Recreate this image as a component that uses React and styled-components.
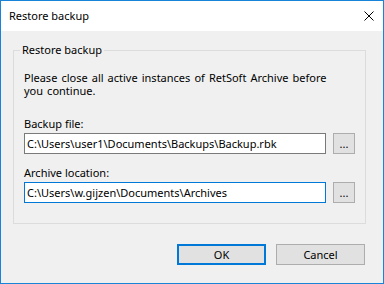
import React from 'react';
import styled, { createGlobalStyle } from 'styled-components';

const GlobalStyle = createGlobalStyle`
  html, body {
    margin: 0;
    padding: 0;
    background: #ffffff;
  }

  body {
    font-family: "Noto Sans", "Liberation Sans", sans-serif;
    font-size: 11px;
    color: #000000;
  }

  * {
    box-sizing: border-box;
  }
`;

const CloseIcon = () => (
  <svg width="10" height="10" viewBox="0 0 10 10" aria-hidden="true">
    <path d="M0.5 0.5 L9.5 9.5 M9.5 0.5 L0.5 9.5" stroke="#000" strokeWidth="1" fill="none" />
  </svg>
);

const PathField = ({ label, value, focused }) => (
  <FieldRow>
    <Label>{label}</Label>
    <InputLine>
      <TextBox focused={focused}>{value}</TextBox>
      <BrowseButton>...</BrowseButton>
    </InputLine>
  </FieldRow>
);

const App = () => (
  <>
    <GlobalStyle />
    <Window>
      <TitleBar>
        <Title>Restore backup</Title>
        <CloseButton>
          <CloseIcon />
        </CloseButton>
      </TitleBar>

      <Body>
        <GroupBox>
          <Legend>Restore backup</Legend>
          <Message>
            Please close all active instances of RetSoft Archive before
            <br />
            you continue.
          </Message>

          <PathField
            label="Backup file:"
            value="C:\Users\user1\Documents\Backups\Backup.rbk"
          />
          <PathField
            label="Archive location:"
            value="C:\Users\w.gijzen\Documents\Archives"
            focused
          />
        </GroupBox>

        <ButtonBar>
          <DialogButton primary>OK</DialogButton>
          <DialogButton>Cancel</DialogButton>
        </ButtonBar>
      </Body>
    </Window>
  </>
);

export default App;

const Window = styled.div`
  display: flex;
  flex-direction: column;
  width: 384px;
  height: 284px;
  border: 1px solid #1883d7;
  background: #f0f0f0;
`;

const TitleBar = styled.div`
  display: flex;
  align-items: center;
  justify-content: space-between;
  height: 30px;
  padding: 0 9px 0 8px;
  background: #ffffff;
`;

const Title = styled.span`
  line-height: 16px;
`;

const CloseButton = styled.span`
  display: flex;
  align-items: center;
  height: 10px;
`;

const Body = styled.div`
  display: flex;
  flex: 1;
  flex-direction: column;
  padding: 12px 17px 0 12px;
`;

const GroupBox = styled.fieldset`
  margin: 0;
  padding: 14px 10px 20px 10px;
  border: 1px solid #dcdcdc;
  min-width: 0;
`;

const Legend = styled.legend`
  margin-left: -4px;
  padding: 0 2px;
  line-height: 14px;
`;

const Message = styled.p`
  margin: 0 0 20px;
  line-height: 13px;
  word-spacing: 1.2px;
  white-space: nowrap;
`;

const FieldRow = styled.div`
  display: flex;
  flex-direction: column;

  & + & {
    margin-top: 12px;
  }
`;

const Label = styled.div`
  line-height: 13px;
  margin-bottom: 3px;
`;

const InputLine = styled.div`
  display: flex;
  gap: 7px;
`;

const TextBox = styled.div`
  width: 302px;
  height: 21px;
  padding: 0 2px;
  border: 1px solid ${(p) => (p.focused ? '#0078d7' : '#7a7a7a')};
  background: #ffffff;
  line-height: 19px;
  white-space: nowrap;
  overflow: hidden;
`;

const BrowseButton = styled.div`
  display: flex;
  align-items: center;
  justify-content: center;
  width: 22px;
  height: 21px;
  border: 1px solid #adadad;
  background: #e1e1e1;
  line-height: 19px;
`;

const ButtonBar = styled.div`
  display: flex;
  justify-content: flex-end;
  gap: 10px;
  margin-top: 20px;
  padding-right: 1px;
`;

const DialogButton = styled.div`
  display: flex;
  align-items: center;
  justify-content: center;
  width: 89px;
  height: 21px;
  border: ${(p) => (p.primary ? '2px solid #0078d7' : '1px solid #adadad')};
  background: #e1e1e1;
`;
